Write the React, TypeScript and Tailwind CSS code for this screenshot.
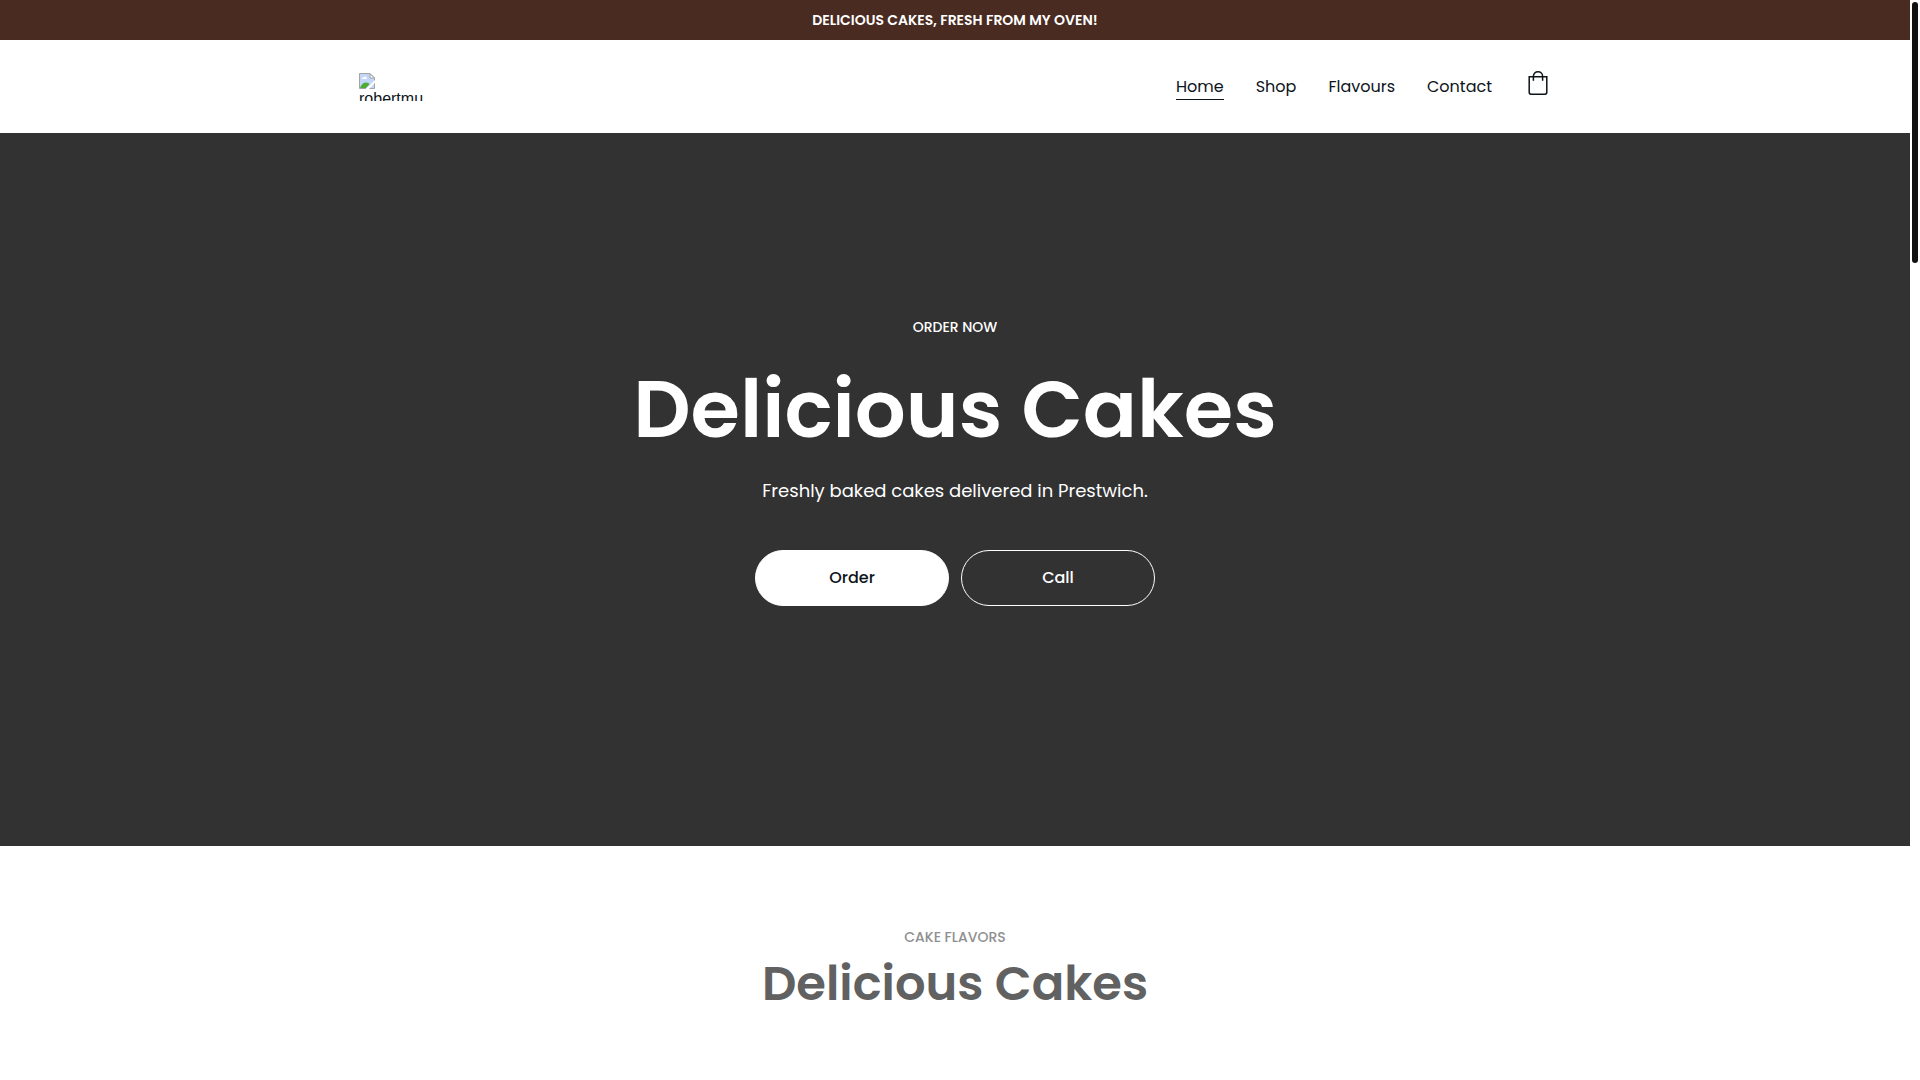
import React from 'react';

const navLinks = [
  { label: 'Home', href: '#home', active: true },
  { label: 'Shop', href: '#shop' },
  { label: 'Flavours', href: '#flavours' },
  { label: 'Contact', href: '#contact' },
];

function Logo() {
  return (
    <a href="#home" className="flex flex-col h-7 w-16 overflow-hidden font-['Liberation_Sans',Arial,sans-serif] text-base leading-5">
      <svg viewBox="0 0 16 16" className="w-4 h-4 shrink-0" aria-hidden="true">
        <path d="M0.5 0.5H11L15.5 5V15.5H0.5Z" fill="#c3d6f7" stroke="#a3a3a3" />
        <path d="M11 1V5H15.5Z" fill="#ffffff" stroke="#a3a3a3" />
        <path d="M3 6C3 4.6 4 4.2 4.8 4.4C5.4 3.2 7.2 3.4 7.4 4.8C8.2 4.8 8.4 6 7.6 6Z" fill="#ffffff" />
        <path d="M1 15C2 11.5 4.5 9.5 7 9.5C8.5 9.5 9.8 10.3 10.5 11.3L7 15Z" fill="#4caa35" />
        <path d="M6.5 16L16 7V10L10 16Z" fill="#ffffff" />
      </svg>
      <span>robertmu</span>
    </a>
  );
}

function BagIcon() {
  return (
    <svg viewBox="0 0 20 24" className="w-5 h-6" fill="none" stroke="#0d141a" strokeWidth="1.5" aria-hidden="true">
      <path d="M1.2 5.8H18.8V21.3C18.8 22.5 18 23.2 17 23.2H3C2 23.2 1.2 22.5 1.2 21.3Z" />
      <path d="M5.4 9.8V5.2C5.4 2.6 7.4 0.8 10 0.8S14.6 2.6 14.6 5.2V9.8" />
    </svg>
  );
}

function Header() {
  return (
    <header className="bg-white">
      <div className="max-w-[1192px] mx-auto py-[30px] flex items-center justify-between">
        <Logo />
        <div className="flex items-center gap-9">
          <nav className="flex items-center gap-8">
            {navLinks.map((link) => (
              <a
                key={link.label}
                href={link.href}
                className={link.active ? 'pt-0.5 leading-6 border-b border-[#0d141a]' : 'pt-0.5 leading-6 border-b border-transparent'}
              >
                {link.label}
              </a>
            ))}
          </nav>
          <button type="button" aria-label="Shopping bag" className="h-[33px] pt-px pr-[3px] flex items-start">
            <BagIcon />
          </button>
        </div>
      </div>
    </header>
  );
}

function Hero() {
  return (
    <section id="home" className="min-h-[66vh] pb-[57px] bg-[#323232] text-white flex flex-col items-center justify-center text-center">
      <p className="text-sm leading-6 font-medium mb-5">ORDER NOW</p>
      <h1 className="text-[80px] leading-[100px] font-semibold mb-4">Delicious Cakes</h1>
      <p className="text-lg leading-8 mb-[43px]">Freshly baked cakes delivered in Prestwich.</p>
      <div className="flex gap-3">
        <a href="#shop" className="w-[194px] h-14 rounded-full bg-white border border-white text-[#0d141a] font-medium flex items-center justify-center">
          Order
        </a>
        <a href="#contact" className="w-[194px] h-14 rounded-full border border-white font-medium flex items-center justify-center">
          Call
        </a>
      </div>
    </section>
  );
}

function Flavours() {
  return (
    <section id="flavours" className="pt-20 pb-16 text-center">
      <p className="text-sm leading-[22px] font-medium text-[#8e8f90] mb-1">CAKE FLAVORS</p>
      <h2 className="text-5xl leading-[64px] font-semibold text-[#616162]">Delicious Cakes</h2>
    </section>
  );
}

export default function App() {
  return (
    <div className="flex min-h-screen bg-white text-[#0d141a] font-['Poppins','Inter',sans-serif]">
      <main className="flex-1 min-w-0">
        <div className="h-10 bg-[#4a2b21] text-white text-sm font-semibold flex items-center justify-center">
          DELICIOUS CAKES, FRESH FROM MY OVEN!
        </div>
        <Header />
        <Hero />
        <Flavours />
      </main>

      {/* Scroll track */}
      <div className="w-[10px] p-[2px] shrink-0" aria-hidden="true">
        <div className="h-[261px] rounded-full bg-[#111111]" />
      </div>
    </div>
  );
}
